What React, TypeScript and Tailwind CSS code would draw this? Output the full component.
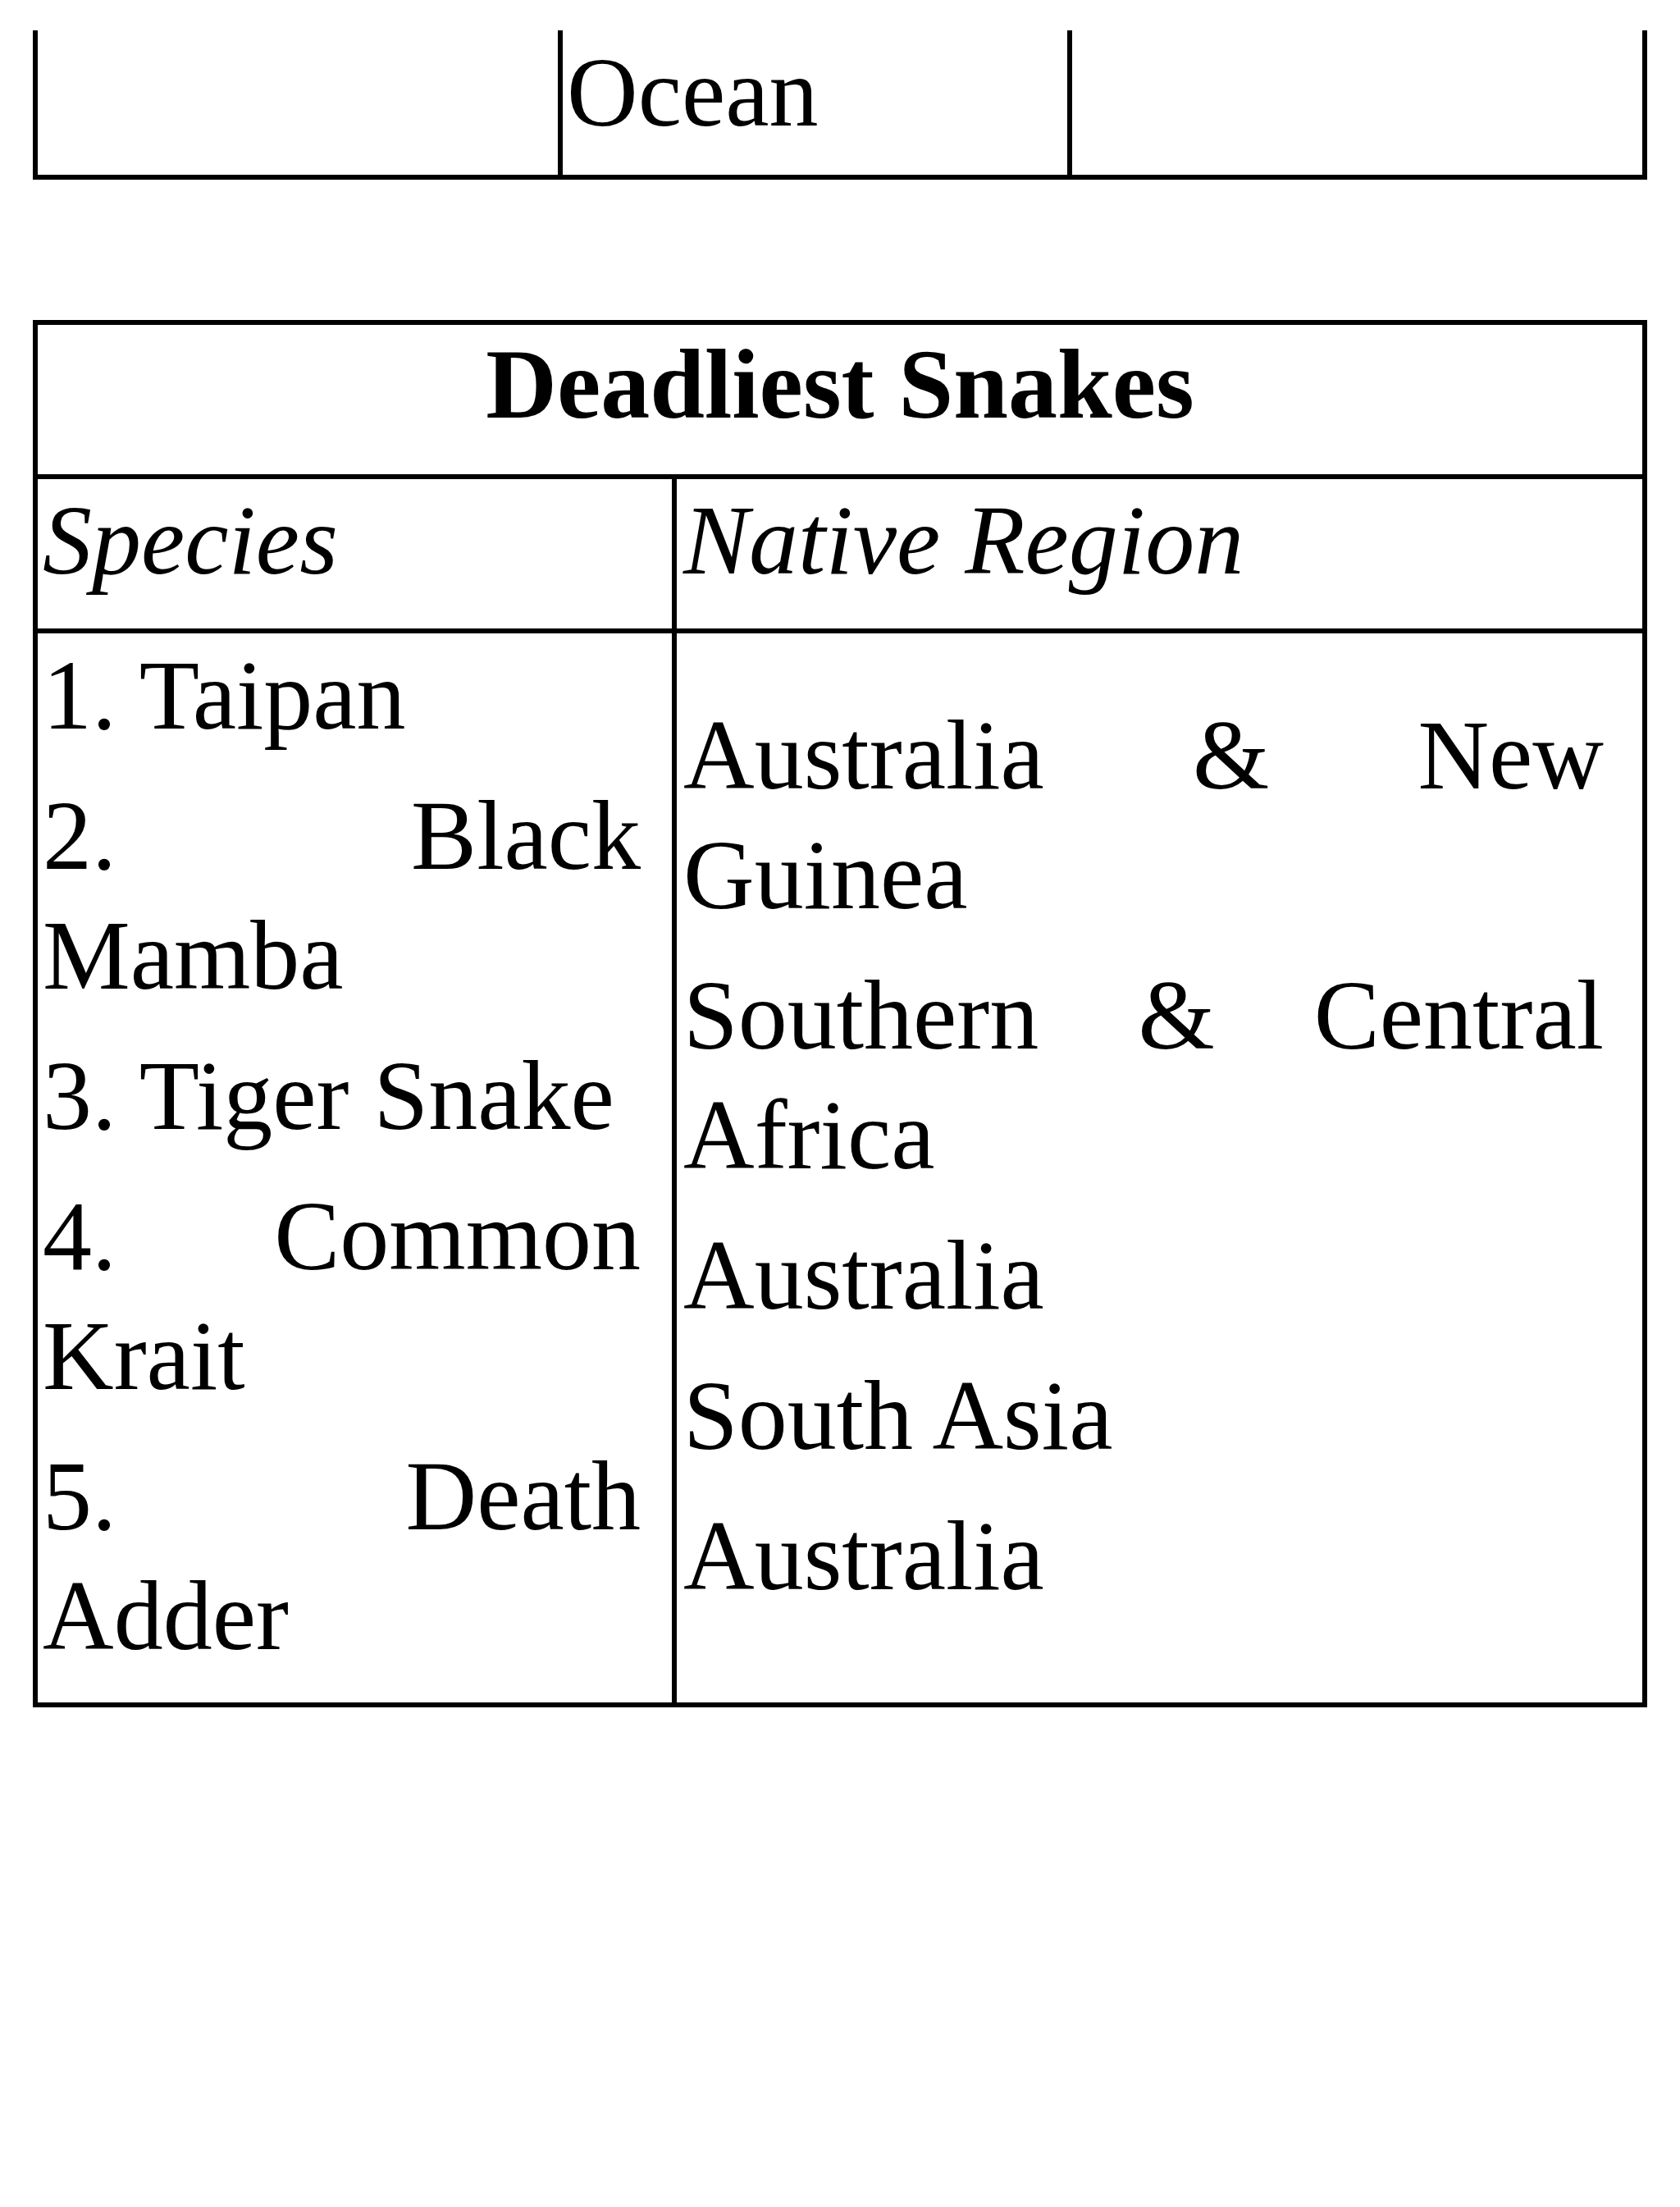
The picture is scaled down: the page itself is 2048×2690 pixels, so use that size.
import React from 'react';

const SPECIES = ['1. Taipan', '2. Black Mamba', '3. Tiger Snake', '4. Common Krait', '5. Death Adder'];

const REGIONS = [
  'Australia & New Guinea',
  'Southern & Central Africa',
  'Australia',
  'South Asia',
  'Australia',
];

export default function App() {
  return (
    <div className="w-[2048px] h-[2690px] bg-white text-black font-['Liberation_Serif','Times_New_Roman',serif] text-[120px] leading-[146px] pt-[37px] pl-[40px]">
      {/* last row of the table carried over from the previous page */}
      <div className="w-[1968px] h-[182px] flex border-x-[6px] border-b-[6px] border-black">
        <div className="w-[640px] border-r-[6px] border-black" />
        <div className="w-[621px] border-r-[6px] border-black pl-[5px] pt-[3px]">Ocean</div>
        <div className="flex-1" />
      </div>

      {/* Deadliest Snakes table */}
      <div className="mt-[171px] w-[1968px] border-[6px] border-black">
        <div className="h-[188px] border-b-[6px] border-black text-center font-bold">Deadliest Snakes</div>

        <div className="grid grid-cols-[779px_1fr] h-[188px] border-b-[6px] border-black italic">
          <div className="border-r-[6px] border-black pl-[6px] pt-[2px]">Species</div>
          <div className="pl-[8px] pt-[2px]">Native Region</div>
        </div>

        <div className="grid grid-cols-[779px_1fr]">
          <div className="border-r-[6px] border-black pl-[6px] pr-[38px] pt-[3px] pb-[7px] text-justify">
            {SPECIES.map((s) => (
              <p key={s} className="mb-[25px]">{s}</p>
            ))}
          </div>
          <div className="flex flex-col justify-center pl-[8px] pr-[47px] pt-[3px] pb-[7px] text-justify">
            {REGIONS.map((r, i) => (
              <p key={i} className="mb-[25px]">{r}</p>
            ))}
          </div>
        </div>
      </div>
    </div>
  );
}
